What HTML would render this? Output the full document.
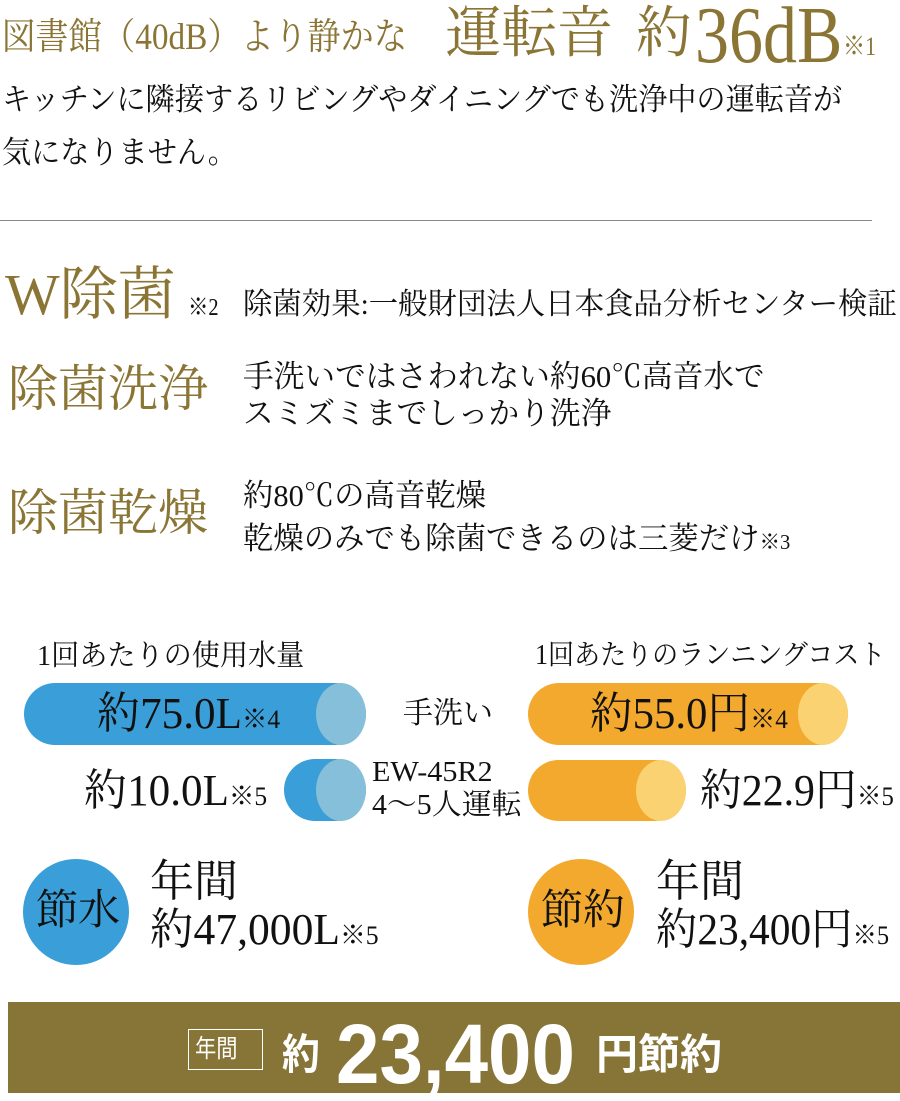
<!DOCTYPE html><html><head><meta charset="utf-8"><style>
*{margin:0;padding:0}
body{width:900px;height:1094px;background:#fff;position:relative;overflow:hidden;font-family:"Liberation Serif","Noto Serif CJK JP","Noto Serif CJK SC",serif;color:#111}
.a{position:absolute;white-space:nowrap;transform-origin:0 0;line-height:1}
.g{color:#8a7535}
.cyl{position:absolute;border-radius:31px}
.cap{position:absolute;top:0;height:100%;border-radius:50%}
</style></head><body>
<div class="a g" style="left:2px;top:19px;font-size:37px;transform:scaleX(.9)">図書館（40dB）より静かな</div>
<div class="a g" style="left:445px;top:6px;font-size:56px">運転音</div>
<div class="a g" style="left:636px;top:6px;font-size:56px">約</div>
<div class="a g" style="left:695px;top:-4px;font-size:80px;transform:scaleX(.85)">36dB</div>
<div class="a g" style="left:843px;top:34px;font-size:26px;transform:scaleX(.85)">※1</div>
<div class="a" style="left:2px;top:84px;font-size:31px;transform:scaleX(.94)">キッチンに隣接するリビングやダイニングでも洗浄中の運転音が</div>
<div class="a" style="left:2px;top:137px;font-size:31px;transform:scaleX(.94)">気になりません。</div>
<div style="position:absolute;left:0;top:220px;width:872px;height:1px;background:#888"></div>
<div class="a g" style="left:5px;top:266px;font-size:58px">W除菌</div>
<div class="a" style="left:188px;top:296px;font-size:24px;transform:scaleX(.85)">※2</div>
<div class="a" style="left:243px;top:290px;font-size:30px;transform:scaleX(.98)">除菌効果:一般財団法人日本食品分析センター検証</div>
<div class="a g" style="left:8px;top:364px;font-size:50px">除菌洗浄</div>
<div class="a" style="left:243px;top:361px;font-size:31px;transform:scaleX(.99)">手洗いではさわれない約60℃高音水で</div>
<div class="a" style="left:243px;top:398px;font-size:31px;transform:scaleX(.99)">スミズミまでしっかり洗浄</div>
<div class="a g" style="left:8px;top:488px;font-size:50px">除菌乾燥</div>
<div class="a" style="left:243px;top:480px;font-size:31px;transform:scaleX(.98)">約80℃の高音乾燥</div>
<div class="a" style="left:243px;top:523px;font-size:31px;transform:scaleX(.98)">乾燥のみでも除菌できるのは三菱だけ<span style="font-size:21px">※3</span></div>

<div class="a" style="left:37px;top:642px;font-size:29px;transform:scaleX(.97)">1回あたりの使用水量</div>
<div class="a" style="left:535px;top:642px;font-size:28px;transform:scaleX(.93)">1回あたりのランニングコスト</div>

<div class="cyl" style="left:24px;top:683px;width:342px;height:62px;background:#3a9fd8"><div class="cap" style="left:292px;width:50px;background:#86bfd9"></div></div>
<div class="a" style="left:97px;top:692px;font-size:44px;transform:scaleX(.98)">約75.0L<span style="font-size:26px">※4</span></div>
<div class="cyl" style="left:284px;top:759px;width:82px;height:62px;background:#3a9fd8"><div class="cap" style="left:32px;width:50px;background:#86bfd9"></div></div>
<div class="a" style="left:84px;top:769px;font-size:44px;transform:scaleX(.98)">約10.0L<span style="font-size:26px">※5</span></div>

<div class="a" style="left:403px;top:699px;font-size:30px">手洗い</div>
<div class="a" style="left:372px;top:758px;font-size:29px;transform:scaleX(1.04)">EW-45R2</div>
<div class="a" style="left:372px;top:791px;font-size:29px;transform:scaleX(1.03)">4～5人運転</div>

<div class="cyl" style="left:528px;top:683px;width:320px;height:62px;background:#f3a92e"><div class="cap" style="left:270px;width:50px;background:#fbd272"></div></div>
<div class="a" style="left:590px;top:692px;font-size:44px;transform:scaleX(.97)">約55.0円<span style="font-size:26px">※4</span></div>
<div class="cyl" style="left:528px;top:760px;width:158px;height:61px;background:#f3a92e"><div class="cap" style="left:108px;width:50px;background:#fbd272"></div></div>
<div class="a" style="left:700px;top:769px;font-size:44px;transform:scaleX(.95)">約22.9円<span style="font-size:26px">※5</span></div>

<div style="position:absolute;left:23px;top:859px;width:106px;height:106px;border-radius:50%;background:#3a9fd8"></div>
<div class="a" style="left:36px;top:890px;font-size:42px">節水</div>
<div class="a" style="left:150px;top:860px;font-size:44px">年間</div>
<div class="a" style="left:150px;top:908px;font-size:44px;transform:scaleX(.99)">約47,000L<span style="font-size:26px">※5</span></div>
<div style="position:absolute;left:528px;top:859px;width:106px;height:106px;border-radius:50%;background:#f3a92e"></div>
<div class="a" style="left:541px;top:890px;font-size:42px">節約</div>
<div class="a" style="left:656px;top:860px;font-size:44px">年間</div>
<div class="a" style="left:656px;top:908px;font-size:44px;transform:scaleX(.94)">約23,400円<span style="font-size:26px">※5</span></div>

<div style="position:absolute;left:8px;top:1002px;width:892px;height:91px;background:#877537"></div>
<div style="position:absolute;left:188px;top:1029px;width:75px;height:41px;border:1px solid #fff;box-sizing:border-box"></div>
<div class="a" style="left:195px;top:1037px;font-size:25px;color:#fff;font-family:'Liberation Sans','Noto Sans CJK JP',sans-serif;transform:scaleX(.85)">年間</div>
<div class="a" style="left:282px;top:1034px;font-size:42px;color:#fff;font-weight:bold;font-family:'Liberation Sans','Noto Sans CJK JP',sans-serif;transform:scaleX(.9)">約</div>
<div class="a" style="left:336px;top:1012px;font-size:84px;color:#fff;font-weight:bold;font-family:'Liberation Sans',sans-serif;transform:scaleX(.93)">23,400</div>
<div class="a" style="left:596px;top:1034px;font-size:42px;color:#fff;font-weight:bold;font-family:'Liberation Sans','Noto Sans CJK JP',sans-serif">円節約</div>
</body></html>
